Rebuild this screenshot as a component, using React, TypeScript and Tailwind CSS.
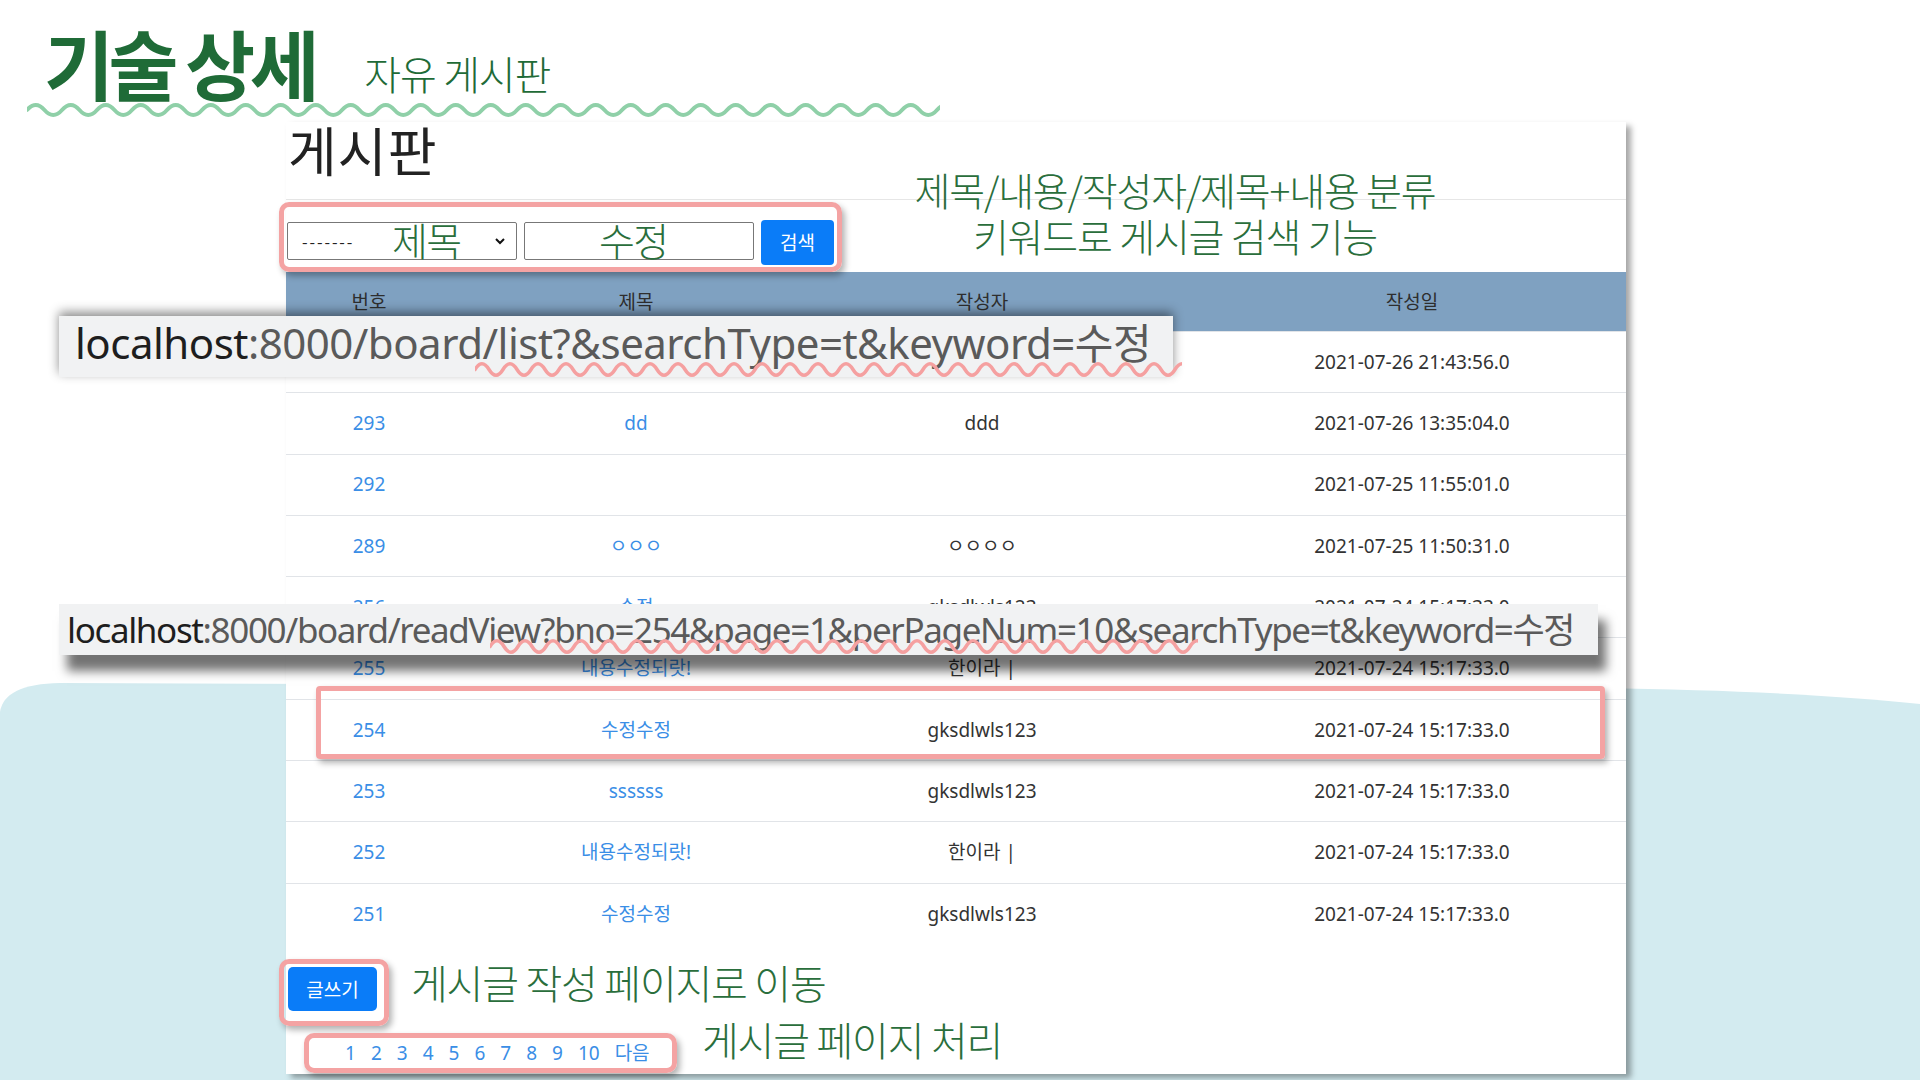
import React from "react";

type Row = { no: string; title: string; writer: string; date: string };

// first row sits under the url bar in the slide, so only its date shows
const ROWS: Row[] = [
  { no: "", title: "", writer: "", date: "2021-07-26 21:43:56.0" },
  { no: "293", title: "dd", writer: "ddd", date: "2021-07-26 13:35:04.0" },
  { no: "292", title: "", writer: "", date: "2021-07-25 11:55:01.0" },
  { no: "289", title: "ㅇㅇㅇ", writer: "ㅇㅇㅇㅇ", date: "2021-07-25 11:50:31.0" },
  { no: "256", title: "수정", writer: "gksdlwls123", date: "2021-07-24 15:17:33.0" },
  { no: "255", title: "내용수정되랏!", writer: "한이라 |", date: "2021-07-24 15:17:33.0" },
  { no: "254", title: "수정수정", writer: "gksdlwls123", date: "2021-07-24 15:17:33.0" },
  { no: "253", title: "ssssss", writer: "gksdlwls123", date: "2021-07-24 15:17:33.0" },
  { no: "252", title: "내용수정되랏!", writer: "한이라 |", date: "2021-07-24 15:17:33.0" },
  { no: "251", title: "수정수정", writer: "gksdlwls123", date: "2021-07-24 15:17:33.0" },
];

const PAGES = ["1", "2", "3", "4", "5", "6", "7", "8", "9", "10"];

// squiggly underline, drawn as repeated quadratic curves
function Wave({
  width,
  height,
  period,
  color,
  stroke,
}: {
  width: number;
  height: number;
  period: number;
  color: string;
  stroke: number;
}) {
  const amp = height - stroke;
  const n = Math.ceil(width / period);
  let d = `M0 ${height / 2}`;
  for (let i = 0; i < n; i++) {
    d += ` q ${period / 4} ${-amp} ${period / 2} 0 t ${period / 2} 0`;
  }
  return (
    <svg width={width} height={height} viewBox={`0 0 ${width} ${height}`} className="block overflow-hidden">
      <path d={d} fill="none" stroke={color} strokeWidth={stroke} strokeLinecap="round" />
    </svg>
  );
}

function UrlBar({ host, rest, size }: { host: string; rest: string; size: string }) {
  return (
    <span className={`font-['Noto_Sans','Noto_Sans_CJK_KR',sans-serif] whitespace-nowrap leading-none ${size}`}>
      <span className="text-[#1e1e1e]">{host}</span>
      <span className="text-[#5a5a5a]">{rest}</span>
    </span>
  );
}

export default function App() {
  return (
    <div className="relative w-[1920px] h-[1080px] overflow-hidden bg-white font-['Noto_Sans_CJK_KR',sans-serif]">
      {/* background blob */}
      <svg className="absolute left-0 top-0" width="1920" height="1080" viewBox="0 0 1920 1080">
        <path d="M0 712 Q4 684 60 683 L1600 688 Q1800 691 1920 704 L1920 1080 L0 1080 Z" fill="#d3ebf0" />
      </svg>

      {/* slide title */}
      <header className="relative h-[122px]">
        <div className="flex items-end pl-[44px] pt-[24px]">
          <h1 className="text-[76px] font-bold leading-none tracking-[-0.07em] text-[#1f6b37]">기술 상세</h1>
          <span className="ml-[50px] mb-[7px] text-[40px] font-light leading-none tracking-[-0.03em] text-[#1f6b37]">자유 게시판</span>
        </div>
        <div className="absolute left-[27px] top-[103px]">
          <Wave width={913} height={14} period={35} color="#8fd0a8" stroke={4} />
        </div>
      </header>

      {/* board screenshot */}
      <main className="relative ml-[286px] w-[1340px] h-[952px] bg-white shadow-[5px_4px_6px_rgba(0,0,0,0.35)]">
        <div className="h-[78px] border-b border-[#e6e6e6] pl-[2px] pt-[1px]">
          <h2 className="text-[53px] leading-none tracking-[0.02em] text-[#222]">게시판</h2>
        </div>

        {/* search */}
        <div className="relative h-[72px]">
          <div className="absolute left-[-7px] top-[2px] w-[563px] h-[70px] rounded-[10px] border-[5px] border-[#f4a3a3] shadow-[3px_4px_6px_rgba(0,0,0,0.3)]" />
          <div className="flex items-start pl-[1px] pt-[22px] gap-[7px]">
            <div className="relative flex items-center w-[230px] h-[38px] border border-[#777] rounded-[2px] bg-white">
              <span className="pl-[14px] text-[16px] tracking-[0.12em] text-[#222]">-------</span>
              <span className="absolute left-[104px] top-[-3px] text-[39px] font-light leading-none tracking-[-0.04em] text-[#2a6e3c]">제목</span>
              <svg className="absolute right-[11px] top-[15px]" width="10" height="7" viewBox="0 0 10 7">
                <path d="M1 1 L5 5 L9 1" fill="none" stroke="#111" strokeWidth="2" />
              </svg>
            </div>
            <div className="relative w-[230px] h-[38px] border border-[#777] rounded-[2px] bg-white">
              <span className="absolute left-[74px] top-[-3px] text-[39px] font-light leading-none tracking-[-0.04em] text-[#2a6e3c]">수정</span>
            </div>
            <button className="mt-[-2px] w-[73px] h-[45px] rounded-[4px] bg-[#0a7cf8] text-[19px] text-white">검색</button>
          </div>
        </div>

        {/* table */}
        <div className="grid grid-cols-[166px_368px_324px_482px] h-[59px] items-center bg-[#7fa1c1] text-[19px] text-[#2e2e2e] text-center">
          <div>번호</div>
          <div>제목</div>
          <div>작성자</div>
          <div className="pl-[54px]">작성일</div>
        </div>
        {ROWS.map((r) => (
          <div
            key={r.date + r.no}
            className="grid grid-cols-[166px_368px_324px_482px] h-[61.3px] items-center border-t border-[#e1e4e8] first:border-t-0 text-[19px] text-center font-['Noto_Sans','Noto_Sans_CJK_KR',sans-serif]"
          >
            <div className="text-[#3a8ee6]">{r.no}</div>
            <div className="text-[#3a8ee6]">{r.title}</div>
            <div className="text-[#333]">{r.writer}</div>
            <div className="pl-[54px] text-[#333]">{r.date}</div>
          </div>
        ))}

        {/* write button */}
        <div className="flex items-center mt-[23px] h-[44px]">
          <div className="relative">
            <div className="absolute left-[-7px] top-[-8px] w-[110px] h-[67px] rounded-[10px] border-[5px] border-[#f4a3a3] shadow-[3px_4px_6px_rgba(0,0,0,0.3)]" />
            <button className="relative ml-[2px] w-[89px] h-[44px] rounded-[5px] bg-[#0a7cf8] text-[19px] text-white">글쓰기</button>
          </div>
          <span className="ml-[34px] mt-[-14px] text-[40px] font-light leading-none tracking-[-0.03em] text-[#2a6e3c]">게시글 작성 페이지로 이동</span>
        </div>

        {/* pagination */}
        <div className="flex items-center mt-[22px]">
          <div className="relative h-[40px] w-[373px] ml-[18px] rounded-[10px] border-[5px] border-[#f4a3a3] shadow-[3px_4px_6px_rgba(0,0,0,0.3)] flex items-center pl-[36px] gap-[15px] text-[19px] text-[#3a8ee6] font-['Noto_Sans','Noto_Sans_CJK_KR',sans-serif]">
            {PAGES.map((p) => (
              <span key={p}>{p}</span>
            ))}
            <span>다음</span>
          </div>
          <span className="ml-[25px] mt-[-28px] text-[40px] font-light leading-none tracking-[-0.03em] text-[#2a6e3c]">게시글 페이지 처리</span>
        </div>
      </main>

      {/* annotations over the board */}
      <div className="absolute left-[900px] top-[166px] w-[550px] text-center text-[39px] font-light leading-[46px] tracking-[-0.03em] text-[#2a6e3c]">
        <div>제목/내용/작성자/제목+내용 분류</div>
        <div>키워드로 게시글 검색 기능</div>
      </div>

      <div className="absolute left-[316px] top-[686px] w-[1289px] h-[73px] rounded-[4px] border-[5px] border-[#f4a3a3] shadow-[3px_4px_6px_rgba(0,0,0,0.3)]" />

      <div className="absolute left-[59px] top-[316px] w-[1114px] h-[61px] bg-[#f1f2f3] shadow-[0_-4px_10px_rgba(0,0,0,0.45)] flex items-start pt-[6px] pl-[16px]">
        <UrlBar host="localhost" rest=":8000/board/list?&searchType=t&keyword=수정" size="text-[42px] tracking-[-0.012em]" />
      </div>
      <div className="absolute left-[475px] top-[362px]">
        <Wave width={707} height={15} period={28} color="#f5a0a0" stroke={3.5} />
      </div>

      <div className="absolute left-[59px] top-[604px] w-[1539px] h-[51px] bg-[#f1f2f3] shadow-[8px_16px_10px_rgba(0,0,0,0.55)] flex items-center pl-[8px]">
        <UrlBar host="localhost" rest=":8000/board/readView?bno=254&page=1&perPageNum=10&searchType=t&keyword=수정" size="text-[35px] tracking-[-0.039em]" />
      </div>
      <div className="absolute left-[490px] top-[639px]">
        <Wave width={708} height={15} period={28} color="#f5a0a0" stroke={3.5} />
      </div>
    </div>
  );
}
